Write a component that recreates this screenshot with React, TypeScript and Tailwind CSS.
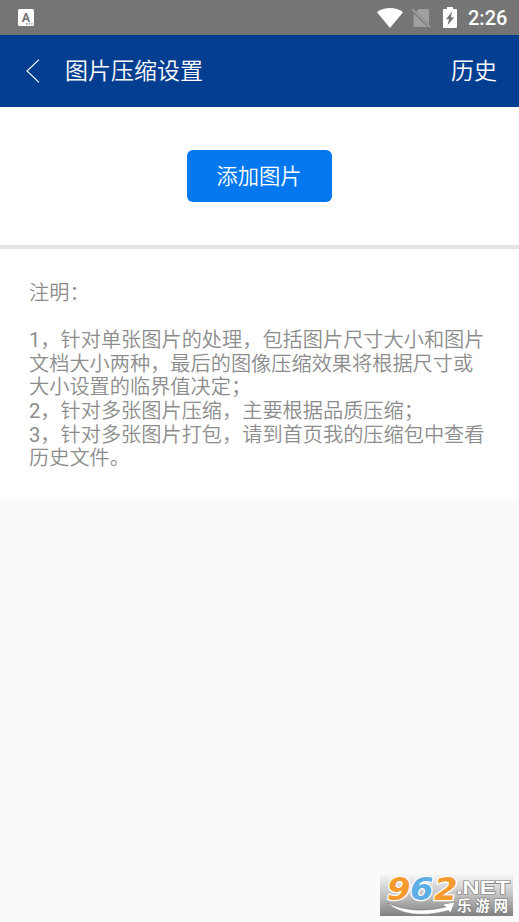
const notes = [
  { text: "注明：" },
  { text: "" },
  { num: "1", text: "，针对单张图片的处理，包括图片尺寸大小和图片" },
  { text: "文档大小两种，最后的图像压缩效果将根据尺寸或" },
  { text: "大小设置的临界值决定；" },
  { num: "2", text: "，针对多张图片压缩，主要根据品质压缩；" },
  { num: "3", text: "，针对多张图片打包，请到首页我的压缩包中查看" },
  { text: "历史文件。" },
];

function StatusBar() {
  return (
    <div className="flex h-[35px] items-center bg-[#757575] pl-[18px] pr-[11px] text-white">
      <svg width="16" height="17" viewBox="0 0 16 17">
        <rect width="16" height="17" rx="1.5" fill="#fff" />
        <text x="8" y="12.6" fontFamily="Roboto, sans-serif" fontSize="12.5" fontWeight="700" textAnchor="middle" fill="#757575">
          A
        </text>
        <path d="M8 14.8h1.4M10.6 14.8H12M13.2 14.8h1.4" stroke="#757575" strokeWidth="1.2" />
      </svg>
      <div className="ml-auto flex items-center">
        <svg width="26" height="20" viewBox="0 0 26 20">
          <path d="M0 4.2C7.5-1.4 18.5-1.4 26 4.2L13 20Z" fill="#fff" />
        </svg>
        <svg className="ml-2" width="20" height="20" viewBox="0 0 20 20">
          <path d="M8 1h8.5Q18 1 18 2.5V16L5.3 3.7ZM2.5 5.5 16.5 19H4Q2.5 19 2.5 17.5Z" fill="#a0a0a0" />
          <path d="M1 1 19 19" stroke="#a0a0a0" strokeWidth="1.7" />
        </svg>
        <svg className="ml-[12px]" width="14" height="21" viewBox="0 0 14 21">
          <path d="M4 0h6v2h3Q14 2 14 3v17q0 1-1 1H1q-1 0-1-1V3Q0 2 1 2h3Z" fill="#fff" />
          <path d="M9 4.5 3 12.2h3l-1.4 6L11.2 10.3H8Z" fill="#757575" />
        </svg>
        <span className="ml-[11px] w-[40px] whitespace-nowrap font-[Roboto] text-[20px] font-medium leading-none">2:26</span>
      </div>
    </div>
  );
}

function Watermark() {
  return (
    <svg
      className="absolute left-[380px] top-[863px]"
      width="133"
      height="53"
      viewBox="0 -10 133 53"
      fontFamily="'Liberation Sans', 'Noto Sans CJK SC', sans-serif"
      fontWeight="bold"
    >
      <defs>
        <linearGradient id="plate" x1="0" y1="0" x2="0" y2="1">
          <stop offset="0" stopColor="#f9f9f9" />
          <stop offset="0.5" stopColor="#c4c4c4" />
          <stop offset="1" stopColor="#808080" />
        </linearGradient>
      </defs>
      <rect width="133" height="43" fill="url(#plate)" />
      <path d="M7 30Q33 42 66 34L62 31.5L75 29L70.5 40L68.500 37.500Q28 48 7 30Z" fill="#fff" stroke="#777" strokeWidth=".5" />
      <g fontFamily="'DejaVu Sans', sans-serif" fontSize="32" fontStyle="italic" stroke="#fff" strokeWidth="2.5" strokeLinejoin="round" paintOrder="stroke">
        <text x="7" y="26.5" textLength="23.5" lengthAdjust="spacingAndGlyphs" fill="#f59a2c">9</text>
        <text x="30" y="26.5" textLength="23.5" lengthAdjust="spacingAndGlyphs" fill="#5eaee6">6</text>
        <text x="54" y="26.5" textLength="23.5" lengthAdjust="spacingAndGlyphs" fill="#f59a2c">2</text>
      </g>
      <g fill="#fff" stroke="#777" strokeWidth="1.2" paintOrder="stroke">
        <text x="76" y="20.5" fontSize="18" textLength="54" lengthAdjust="spacingAndGlyphs">.NET</text>
        <text x="77" y="37.5" fontSize="14.5" textLength="51">乐游网</text>
      </g>
    </svg>
  );
}

export default function App() {
  return (
    <div className="relative h-[922px] w-[519px] overflow-hidden bg-[#fafafa] font-[Roboto,'Noto_Sans_CJK_SC',sans-serif]">
      <StatusBar />
      <header className="flex h-[72px] items-center bg-[#033e90] pl-[26px] pr-[22px] text-[23px] font-[350] text-white">
        <svg width="14" height="24" viewBox="0 0 14 24" fill="none" stroke="#fff" strokeWidth="1.1">
          <path d="M13 .7 1 12l12 11.3" />
        </svg>
        <h1 className="ml-[25px] pt-[3px]">图片压缩设置</h1>
        <button className="ml-auto pt-[3px]">历史</button>
      </header>
      <section className="flex h-[142px] justify-center border-b-4 border-[#e2e2e2] bg-white pt-[43px]">
        <button className="mr-px h-[52px] w-[145px] rounded-md bg-[#0478ee] pt-px text-[21.3px] font-[350] text-white">
          添加图片
        </button>
      </section>
      <section className="h-[250px] bg-white pl-[29px] pt-[33px] text-[20.2px] font-[350] leading-[23.6px] text-[#8c8c8c]">
        {notes.map((note, i) => (
          <p key={i} className="h-[23.6px] whitespace-nowrap">
            {note.num && <span className="font-normal">{note.num}</span>}
            {note.text}
          </p>
        ))}
      </section>
      <Watermark />
    </div>
  );
}
